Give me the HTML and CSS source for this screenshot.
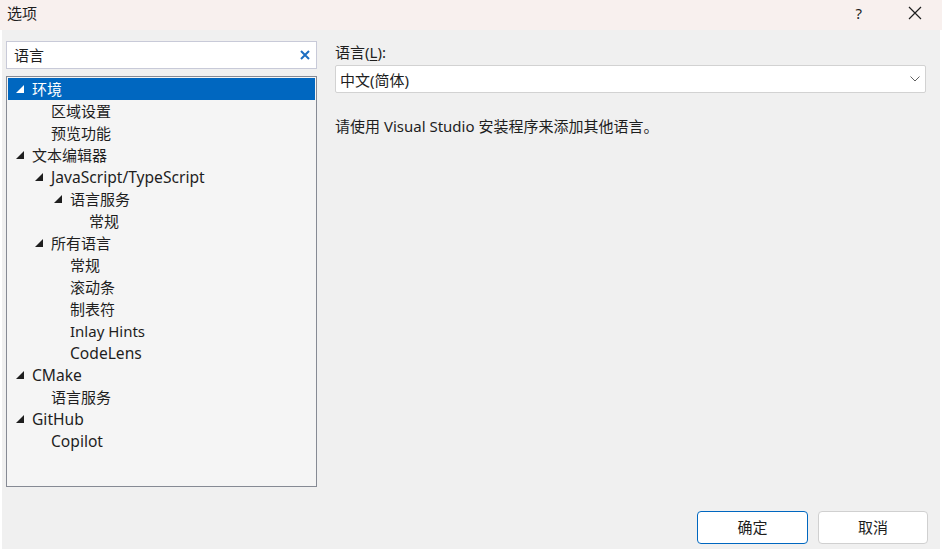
FILE: index.html
```html
<!DOCTYPE html>
<html lang="zh-CN">
<head>
<meta charset="utf-8">
<title>选项</title>
<link rel="stylesheet" href="styles.css">
</head>
<body>
<div class="window">
  <div class="titlebar">
    <span class="title">选项</span>
    <span class="help">?</span>
    <span class="close">
      <svg width="14" height="14" viewBox="0 0 14 14"><path d="M1 1 L13 13 M13 1 L1 13" stroke="#1e1e1e" stroke-width="1.2" fill="none"/></svg>
    </span>
  </div>
  <div class="client">
    <div class="main">
      <div class="left">
        <div class="search">
          <span class="search-text">语言</span>
          <svg class="clear" width="10" height="10" viewBox="0 0 10 10"><path d="M1 1 L9 9 M9 1 L1 9" stroke="#1b6ec2" stroke-width="2" fill="none"/></svg>
        </div>
        <div class="tree">
          <div class="row l0 selected"><span class="exp open"></span><span>环境</span></div>
          <div class="row l1"><span class="exp"></span><span>区域设置</span></div>
          <div class="row l1"><span class="exp"></span><span>预览功能</span></div>
          <div class="row l0"><span class="exp open"></span><span>文本编辑器</span></div>
          <div class="row l1"><span class="exp open"></span><span class="lat">JavaScript/TypeScript</span></div>
          <div class="row l2"><span class="exp open"></span><span>语言服务</span></div>
          <div class="row l3"><span class="exp"></span><span>常规</span></div>
          <div class="row l1"><span class="exp open"></span><span>所有语言</span></div>
          <div class="row l2"><span class="exp"></span><span>常规</span></div>
          <div class="row l2"><span class="exp"></span><span>滚动条</span></div>
          <div class="row l2"><span class="exp"></span><span>制表符</span></div>
          <div class="row l2"><span class="exp"></span><span>Inlay Hints</span></div>
          <div class="row l2"><span class="exp"></span><span class="lat">CodeLens</span></div>
          <div class="row l0"><span class="exp open"></span><span class="lat">CMake</span></div>
          <div class="row l1"><span class="exp"></span><span>语言服务</span></div>
          <div class="row l0"><span class="exp open"></span><span class="lat">GitHub</span></div>
          <div class="row l1"><span class="exp"></span><span class="lat">Copilot</span></div>
        </div>
      </div>
      <div class="right">
        <div class="label">语言(<u>L</u>):</div>
        <div class="select">
          <span>中文(简体)</span>
          <svg class="chev" width="10" height="6" viewBox="0 0 10 6"><path d="M0.5 0.5 L5 5 L9.5 0.5" stroke="#606060" stroke-width="1" fill="none"/></svg>
        </div>
        <div class="note">请使用 Visual Studio 安装程序来添加其他语言。</div>
      </div>
    </div>
    <div class="footer">
      <button class="btn primary">确定</button>
      <button class="btn cancel">取消</button>
    </div>
  </div>
</div>
</body>
</html>
```

FILE: styles.css
```css
html, body {
  margin: 0;
  padding: 0;
  background: #ffffff;
}
body {
  font-family: "Noto Sans", "Noto Sans CJK SC", sans-serif;
  font-size: 15px;
  color: #1e1e1e;
}
.window {
  width: 942px;
  height: 552px;
  display: flex;
  flex-direction: column;
}
.titlebar {
  height: 30px;
  background: #f8f0ee;
  display: flex;
  align-items: center;
}
.title {
  margin-left: 7px;
  font-size: 15px;
  line-height: 20px;
  margin-top: -4px;
}
.help {
  margin-left: auto;
  margin-right: 46px;
  font-size: 15px;
  margin-top: -4px;
}
.close {
  display: flex;
  margin-right: 20px;
  margin-top: -4px;
}
.client {
  margin-left: 2px;
  width: 938px;
  height: 519px;
  background: #f0f0f0;
  display: flex;
  flex-direction: column;
}
.main {
  display: flex;
  padding: 11px 0 0 4px;
}
.left {
  width: 311px;
  display: flex;
  flex-direction: column;
  gap: 7px;
}
.search {
  height: 28px;
  box-sizing: border-box;
  border: 1px solid #c8cad8;
  background: #ffffff;
  display: flex;
  align-items: center;
  padding: 0 6px 0 7px;
}
.search-text {
  flex: 1;
  line-height: 20px;
}
.tree {
  height: 411px;
  box-sizing: border-box;
  border: 1px solid #868a94;
  background: #f5f5f5;
  padding: 1px 1px;
}
.row {
  height: 22px;
  display: flex;
  align-items: center;
  line-height: 22px;
  white-space: nowrap;
}
.lat {
  font-size: 15.6px;
}
.row.l0 { padding-left: 8px; }
.row.l1 { padding-left: 27px; }
.row.l2 { padding-left: 46px; }
.row.l3 { padding-left: 65px; }
.row.selected {
  background: #0067c0;
  color: #ffffff;
}
.exp {
  width: 16px;
  height: 22px;
  flex: none;
  position: relative;
}
.exp.open::before {
  content: "";
  position: absolute;
  left: 0;
  top: 7px;
  width: 0;
  height: 0;
  border-style: solid;
  border-width: 0 0 8px 8px;
  border-color: transparent transparent #1e1e1e transparent;
}
.selected .exp.open::before {
  border-color: transparent transparent #ffffff transparent;
}
.right {
  margin-left: 18px;
  width: 591px;
  display: flex;
  flex-direction: column;
}
.label {
  line-height: 20px;
  margin-top: 1px;
}
.label u {
  text-decoration-thickness: 1px;
  text-underline-offset: 2px;
}
.select {
  margin-top: 3px;
  height: 28px;
  box-sizing: border-box;
  border: 1px solid #d2d2d2;
  border-radius: 2px;
  background: #ffffff;
  display: flex;
  align-items: center;
  padding: 0 5px 0 4px;
}
.select span {
  flex: 1;
}
.chev {
  display: block;
}
.note {
  margin-top: 23px;
  line-height: 20px;
}
.footer {
  margin-top: auto;
  display: flex;
  justify-content: flex-end;
  gap: 10px;
  padding: 0 12px 5px 0;
}
.btn {
  width: 111px;
  height: 33px;
  box-sizing: border-box;
  background: #ffffff;
  border: 1px solid #d0d0d0;
  border-radius: 4px;
  font-family: inherit;
  font-size: 15px;
  color: #1e1e1e;
  padding: 0 0 2px 0;
}
.btn.cancel {
  width: 110px;
}
.btn.primary {
  border-color: #0067c0;
}
```
